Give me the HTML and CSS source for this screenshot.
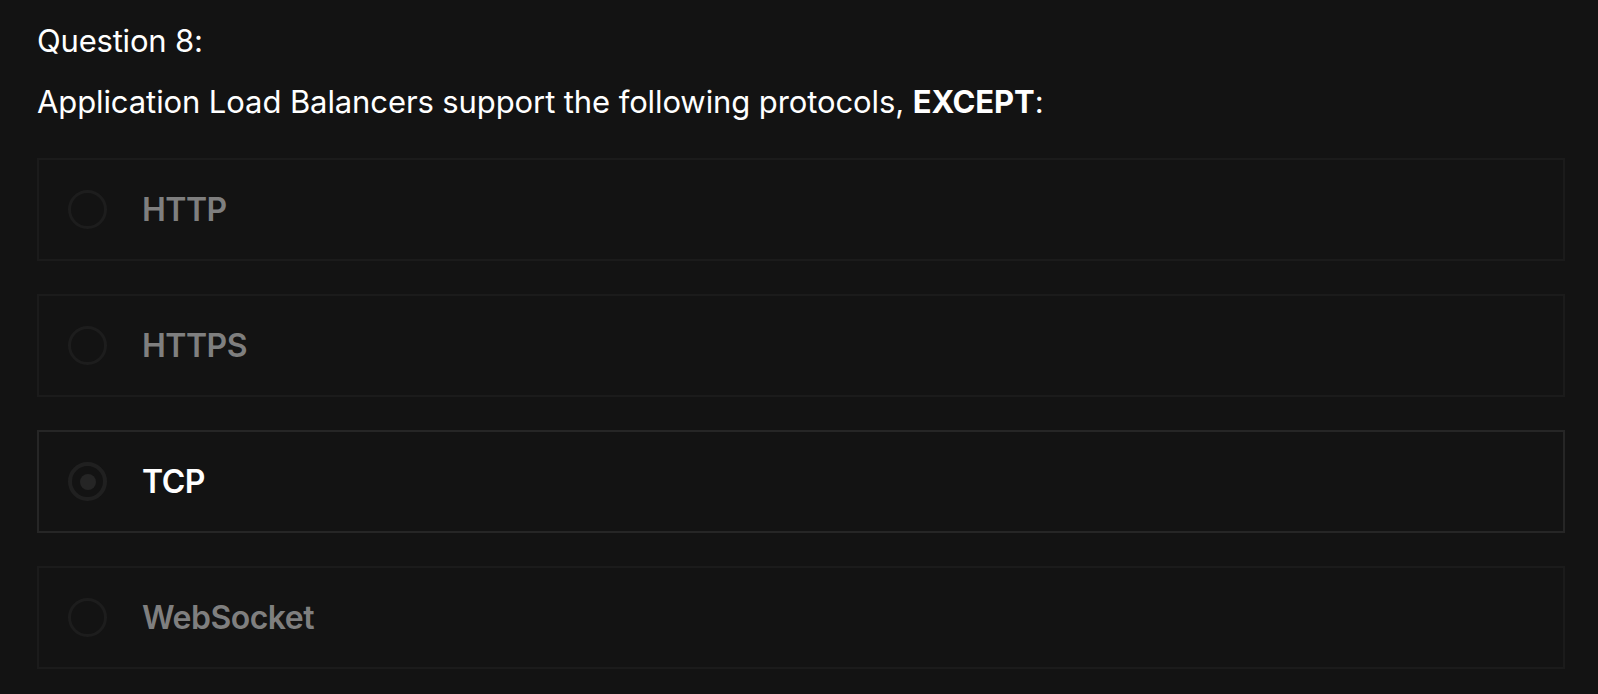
FILE: index.html
```html
<!DOCTYPE html>
<html>
<head>
<meta charset="utf-8">
<link rel="stylesheet" href="styles.css">
</head>
<body>
<div class="quiz">
  <div class="q-num">Question 8:</div>
  <div class="q-text">Application Load Balancers support the following protocols, <strong>EXCEPT</strong>:</div>
  <div class="options">
    <div class="option"><span class="radio"></span><span class="label">HTTP</span></div>
    <div class="option"><span class="radio"></span><span class="label">HTTPS</span></div>
    <div class="option selected"><span class="radio"></span><span class="label">TCP</span></div>
    <div class="option"><span class="radio"></span><span class="label">WebSocket</span></div>
  </div>
</div>
</body>
</html>
```
FILE: styles.css
```css
html, body {
  margin: 0;
  padding: 0;
  background: #131313;
  height: 100%;
  overflow: hidden;
}
body {
  font-family: Inter, "Noto Sans", sans-serif;
  color: #ffffff;
}
.quiz {
  padding: 21px 33px 0 37px;
}
.q-num {
  font-size: 31px;
  line-height: 40px;
  letter-spacing: -0.2px;
}
.q-text {
  font-size: 31px;
  line-height: 40px;
  margin-top: 21px;
  letter-spacing: -0.1px;
}
.q-text strong {
  font-weight: 700;
}
.options {
  display: flex;
  flex-direction: column;
  gap: 33px;
  margin-top: 36px;
}
.option {
  display: flex;
  align-items: center;
  height: 103px;
  box-sizing: border-box;
  border: 2px solid #1b1b1b;
  padding-left: 29px;
}
.radio {
  width: 39px;
  height: 39px;
  box-sizing: border-box;
  border: 3px solid #1d1d1d;
  border-radius: 50%;
  display: flex;
  align-items: center;
  justify-content: center;
  flex-shrink: 0;
}
.label {
  margin-left: 35px;
  font-size: 32px;
  font-weight: 600;
  letter-spacing: -0.5px;
  color: #7f7f7f;
}
.option.selected {
  border-color: #262626;
}
.option.selected .label {
  color: #ffffff;
}
.option.selected .radio {
  border: 4px solid #202020;
}
.option.selected .radio::after {
  content: "";
  width: 16px;
  height: 16px;
  border-radius: 50%;
  background: #252525;
}
```
